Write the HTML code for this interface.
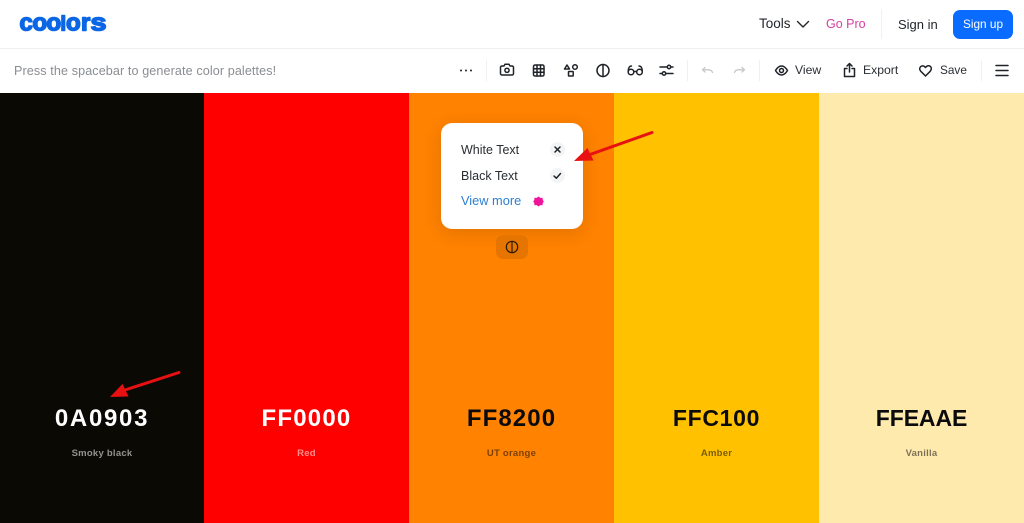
<!DOCTYPE html>
<html><head><meta charset="utf-8"><style>
html,body{margin:0;padding:0;width:1024px;height:523px;overflow:hidden;background:#fff;font-family:"Liberation Sans",sans-serif}
.t{position:absolute;white-space:nowrap;line-height:1}
svg{position:absolute;overflow:visible}
.i{fill:none;stroke:#1f2328;stroke-width:1.5;stroke-linecap:round;stroke-linejoin:round}
.c{position:absolute;top:93px;height:430px}
.h{position:absolute;left:0;right:0;text-align:center;font-size:24px;font-weight:bold;line-height:24px}
.n{position:absolute;left:0;right:0;text-align:center;font-size:9.5px;font-weight:bold;letter-spacing:.25px;line-height:11px;opacity:.55}
.c .h{top:314px}.c .n{top:355px}
.sep{position:absolute;width:1px;background:#eff0f2}
</style></head><body>

<svg style="left:0;top:0" width="130" height="48"><g font-family="Liberation Sans" font-weight="bold" font-size="24" fill="#0b66e4" stroke="#0b66e4" stroke-width="1.500" stroke-linejoin="round">
<text x="19.500" y="30.500">c</text>
<text x="32.500" y="30.500">o</text>
<text x="46.500" y="30.500">o</text>
<text x="60.500" y="30.500" font-size="20">l</text>
<text x="66" y="30.500">o</text>
<text x="81" y="30.500">r</text>
<text transform="translate(90.500 30.500) scale(1.200 1)">s</text>
</g></svg>

<div class="t" style="left:759px;top:17px;font-size:13.5px;color:#22262b">Tools</div>
<svg style="left:796px;top:20px" width="14" height="9"><path d="M1.500 1.500 7 7l5.500-5.500" fill="none" stroke="#22262b" stroke-width="1.400" stroke-linecap="round" stroke-linejoin="round"/></svg>
<div class="t" style="left:826px;top:17.500px;font-size:12.5px;color:#d6409f">Go Pro</div>
<div class="sep" style="left:881px;top:9px;height:30px"></div>
<div class="t" style="left:898px;top:17.500px;font-size:13px;color:#22262b">Sign in</div>
<div style="position:absolute;left:953px;top:10px;width:60px;height:29px;background:#0a6cff;border-radius:7px"></div>
<div class="t" style="left:963px;top:19px;font-size:11.800px;color:#fff">Sign up</div>
<div style="position:absolute;left:0;top:48px;width:1024px;height:1px;background:#eff0f2"></div>

<div class="t" style="left:14px;top:64.500px;font-size:12.6px;color:#8a8d92;letter-spacing:.1px">Press the spacebar to generate color palettes!</div>

<svg style="left:0;top:0" width="1024" height="93">
<g fill="#1f2328"><circle cx="461" cy="70.500" r="1"/><circle cx="466" cy="70.500" r="1"/><circle cx="471" cy="70.500" r="1"/></g>
<g class="i">
<path d="M502 66h2l1-1.800h4l1 1.800h2a1.500 1.500 0 0 1 1.500 1.500v6a1.500 1.500 0 0 1-1.500 1.500h-10a1.500 1.500 0 0 1-1.500-1.500v-6a1.500 1.500 0 0 1 1.500-1.500z"/><circle cx="507" cy="70.300" r="2.100"/>
<rect x="533.500" y="65" width="10.500" height="11" rx="1.500"/><path d="M537 65v11M540.500 65v11M533.500 68.700h10.500M533.500 72.300h10.500"/>
<path d="M567 65l2.500 4h-5z"/><circle cx="575" cy="67" r="2.300"/><rect x="568.500" y="71.500" width="4.700" height="4.500" rx=".5"/>
<circle cx="603" cy="70.500" r="6"/><path d="M603 64.500v12"/>
<circle cx="631" cy="72" r="2.800"/><circle cx="639.500" cy="72" r="2.800"/><path d="M633.800 71.500h3M628.200 71.500c0-3 1-5.500 3.300-5.500M642.300 71.500c0-3-1-5.500-3.300-5.500"/>
<path d="M660 67h13M660 73.500h13"/><circle cx="669" cy="67" r="1.700" fill="#fff"/><circle cx="664" cy="73.500" r="1.700" fill="#fff"/>
</g>
<g fill="none" stroke="#c6c8cc" stroke-width="1.300" stroke-linecap="round" stroke-linejoin="round">
<path d="M705 67.500l-2.500 2.300 2.500 2.200M702.500 69.800h6c2 0 3.500 1 4 2.700"/>
<path d="M742 67.500l2.500 2.300-2.500 2.200M744.500 69.800h-6c-2 0-3.500 1-4 2.700"/>
</g>
<g class="i">
<path d="M775.500 70.500c1.800-3 3.800-4.500 6-4.500s4.200 1.500 6 4.500c-1.800 3-3.800 4.500-6 4.500s-4.200-1.500-6-4.500z"/><circle cx="781.500" cy="70.500" r="2"/>
<path d="M849.500 72V64M847 66l2.500-2.500 2.500 2.500M847 68.500h-2.500v8h10v-8H852"/>
<path d="M925.500 76l-4.800-4.800c-3.200-3.400 1.800-7.800 4.800-3.700 3-4.100 8-.3 4.800 3.700z"/>
<path d="M996 65.500h12M996 70.500h12M996 75.500h12"/>
</g>
</svg>
<div class="sep" style="left:486px;top:60px;height:21px"></div>
<div class="sep" style="left:687px;top:60px;height:21px"></div>
<div class="sep" style="left:759px;top:60px;height:21px"></div>
<div class="sep" style="left:981px;top:60px;height:21px"></div>
<div class="t" style="left:795px;top:64px;font-size:12.2px;color:#2a2e33">View</div>
<div class="t" style="left:863px;top:64px;font-size:12.2px;color:#2a2e33">Export</div>
<div class="t" style="left:940px;top:64.500px;font-size:11.800px;color:#2a2e33">Save</div>

<div class="c" style="left:0;width:204px;background:#0a0903;color:#fff"><div class="h" style="letter-spacing:1.7px">0A0903</div><div class="n">Smoky black</div></div>
<div class="c" style="left:204px;width:205px;background:#ff0000;color:#fff"><div class="h" style="letter-spacing:1.2px">FF0000</div><div class="n">Red</div></div>
<div class="c" style="left:409px;width:205px;background:#ff8200;color:#0b0b0b"><div class="h" style="letter-spacing:1.1px">FF8200</div><div class="n">UT orange</div></div>
<div class="c" style="left:614px;width:205px;background:#ffc100;color:#0b0b0b"><div class="h" style="font-size:23px;letter-spacing:.7px;top:313px">FFC100</div><div class="n">Amber</div></div>
<div class="c" style="left:819px;width:205px;background:#ffeaae;color:#0b0b0b"><div class="h" style="font-size:23px;letter-spacing:-.1px;top:313px">FFEAAE</div><div class="n">Vanilla</div></div>

<div style="position:absolute;left:441px;top:123px;width:142px;height:106px;background:#fff;border-radius:11px;box-shadow:0 4px 18px rgba(0,0,0,.12)"></div>
<div class="t" style="left:461px;top:143.500px;font-size:12.500px;color:#2a2e33">White Text</div>
<div class="t" style="left:461px;top:170px;font-size:12.500px;color:#2a2e33">Black Text</div>
<div class="t" style="left:461px;top:195px;font-size:12.800px;color:#2b7fd0">View more</div>
<div style="position:absolute;left:550px;top:142px;width:15px;height:15px;border-radius:50%;background:#f3f4f5"></div>
<div style="position:absolute;left:550px;top:168px;width:15px;height:15px;border-radius:50%;background:#f3f4f5"></div>
<div style="position:absolute;left:496px;top:235px;width:32px;height:24px;border-radius:7px;background:#e67500"></div>
<svg style="left:0;top:0" width="1024" height="523">
<path d="M555 147l5 5M560 147l-5 5" fill="none" stroke="#1f2328" stroke-width="1.500" stroke-linecap="round"/>
<path d="M554 176l2.300 2.200 4.200-4.700" fill="none" stroke="#1f2328" stroke-width="1.500" stroke-linecap="round" stroke-linejoin="round"/>
<path d="M538.500 196.500l1.800 1.400 2.200-.2.300 2.300 1 1.500-1 1.500-.3 2.300-2.200-.2-1.800 1.400-1.800-1.400-2.200.2-.3-2.300-1-1.500 1-1.500.3-2.300 2.200.2z" fill="#f0149b"/>
<circle cx="512" cy="247" r="5.700" fill="none" stroke="#2a1a05" stroke-width="1.200"/><path d="M512 241.300v11.400" stroke="#2a1a05" stroke-width="1.200"/>
<path d="M652 132.500L590 154.500" stroke="#e81010" stroke-width="3" stroke-linecap="round"/><path d="M574 161l13.500-13 6 12.500z" fill="#e81010"/>
<path d="M179 372.500L125 390" stroke="#e81010" stroke-width="3" stroke-linecap="round"/><path d="M110 397l12.500-13 6 12.500z" fill="#e81010"/>
</svg>
</body></html>
